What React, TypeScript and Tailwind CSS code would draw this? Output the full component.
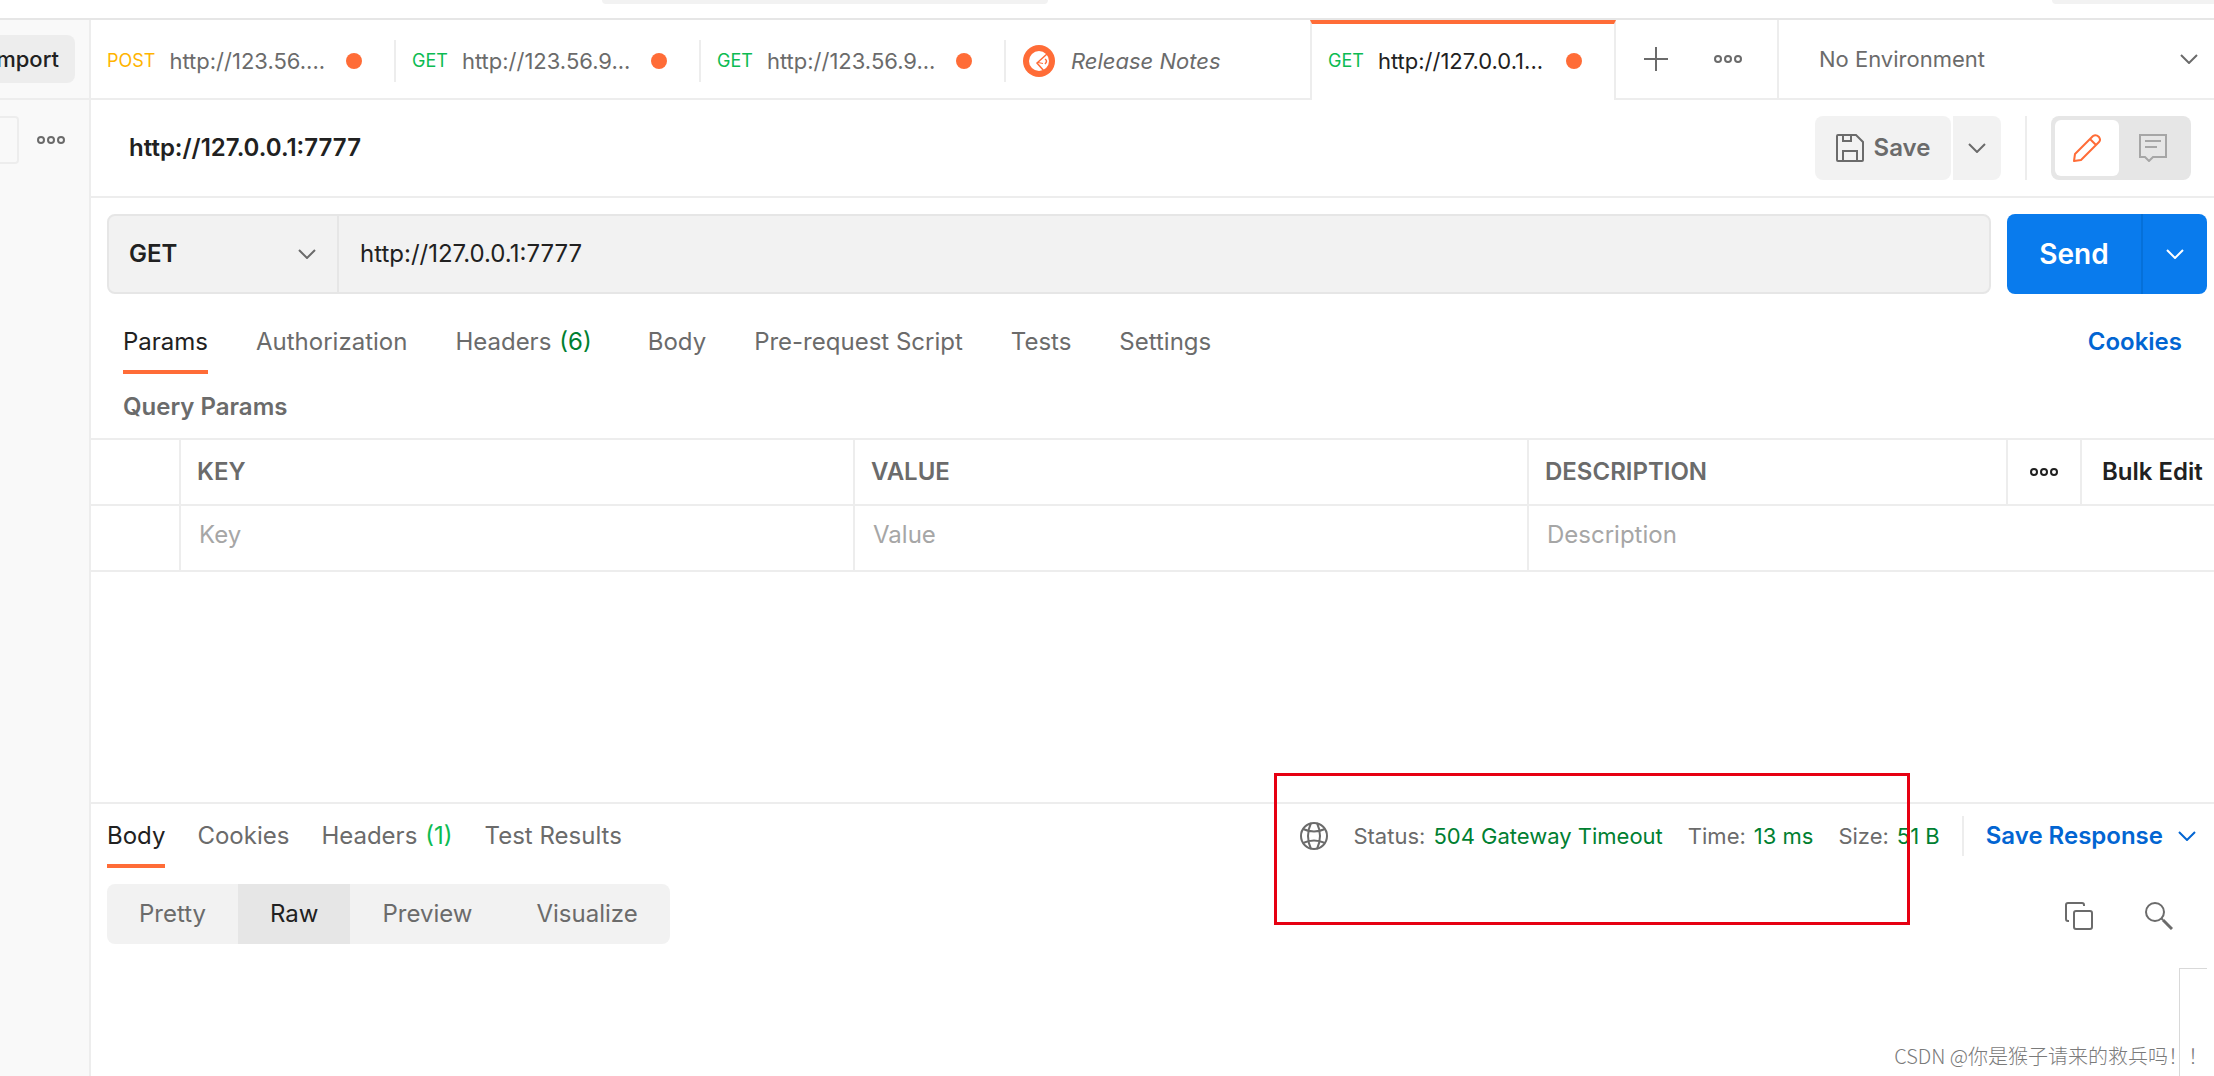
import type { ReactNode } from "react";

type Tab = { method: string; title: string };

const requestTabs: Tab[] = [
  { method: "POST", title: "http://123.56...." },
  { method: "GET", title: "http://123.56.9..." },
  { method: "GET", title: "http://123.56.9..." },
];

function Chevron({ className }: { className: string }) {
  return (
    <svg viewBox="0 0 18 10" fill="none" stroke="currentColor" strokeWidth="2" className={`h-[10px] w-[18px] shrink-0 ${className}`}>
      <path d="M1 1l8 8 8-8" />
    </svg>
  );
}

function Dots({ className }: { className: string }) {
  return (
    <svg viewBox="0 0 30 10" fill="none" stroke="currentColor" strokeWidth="2" className={`h-[10px] w-[30px] shrink-0 ${className}`}>
      <circle cx="5" cy="5" r="3" />
      <circle cx="15" cy="5" r="3" />
      <circle cx="25" cy="5" r="3" />
    </svg>
  );
}

function UnsavedDot() {
  return <span className="ml-auto size-4 shrink-0 rounded-full bg-[#ff6c37]" />;
}

function RequestTab({ method, title }: Tab) {
  return (
    <button className="flex h-full w-[305px] shrink-0 items-center pt-1 text-left">
      <span className="flex flex-1 items-center gap-[14px] pl-4 pr-8">
        <span className={`text-lg ${method === "POST" ? "text-[#ffb400]" : "text-[#0cbb52]"}`}>{method}</span>
        <span className="text-[22px] text-[#6b6b6b]">{title}</span>
        <UnsavedDot />
      </span>
      <span className="h-[42px] w-0.5 bg-[#ededed]" />
    </button>
  );
}

function Sidebar() {
  return (
    <aside className="flex w-[91px] shrink-0 flex-col border-r-2 border-[#ededed] bg-[#f9f9f9]">
      <div className="flex h-20 items-center overflow-hidden border-b-2 border-[#ededed]">
        <button className="flex h-12 w-[75px] items-center justify-end rounded-r-lg bg-[#ededed] pr-4 text-[22px] font-medium text-[#212121]">
          Import
        </button>
      </div>
      <div className="flex items-center gap-[17px] pt-4">
        <input aria-label="Filter" className="h-12 w-[19px] rounded-r border-2 border-l-0 border-[#ededed]" />
        <button aria-label="More">
          <Dots className="text-[#6b6b6b]" />
        </button>
      </div>
    </aside>
  );
}

function TabBar() {
  return (
    <div className="flex h-20 text-[22px]">
      <div className="flex border-b-2 border-[#ededed]">
        {requestTabs.map((tab, i) => (
          <RequestTab key={i} {...tab} />
        ))}
        <button className="flex w-[304px] shrink-0 items-center gap-4 pl-[17px] pt-1 text-[#6b6b6b]">
          <svg viewBox="0 0 32 32" fill="none" className="size-8">
            <circle cx="16" cy="16" r="16" fill="#ff6c37" />
            <circle cx="16" cy="16" r="10" fill="#fff" />
            <path d="M24 9l-10 9 7 8" stroke="#ff6c37" strokeWidth="1.5" />
            <path d="M22 14q3 2 0 5" stroke="#ff6c37" strokeWidth="1.5" />
            <path d="M15 17.500l5 1" stroke="#ff6c37" strokeWidth="1" />
          </svg>
          <span className="italic">Release Notes</span>
        </button>
      </div>
      <button className="flex w-[306px] shrink-0 items-center gap-[14px] border-x-2 border-t-4 border-x-[#ededed] border-t-[#ff6c37] pb-0.5 pl-4 pr-8">
        <span className="text-lg text-[#0cbb52]">GET</span>
        <span className="text-[#212121]">http://127.0.0.1...</span>
        <UnsavedDot />
      </button>
      <div className="flex flex-1 items-center border-b-2 border-[#ededed] text-[#6b6b6b]">
        <div className="flex h-full w-[163px] shrink-0 items-center gap-[45px] border-r-2 border-[#ededed] pl-7">
          <button aria-label="New tab">
            <svg viewBox="0 0 24 24" stroke="currentColor" strokeWidth="2" className="size-6">
              <path d="M12 0v24M0 12h24" />
            </svg>
          </button>
          <button aria-label="Tab options">
            <Dots className="" />
          </button>
        </div>
        <button className="flex flex-1 items-center justify-between pl-10 pr-4">
          No Environment
          <Chevron className="" />
        </button>
      </div>
    </div>
  );
}

function TitleBar() {
  return (
    <div className="flex h-[98px] items-center border-b-2 border-[#ededed] pl-[38px] pr-[23px]">
      <h1 className="text-2xl font-semibold text-[#212121]">http://127.0.0.1:7777</h1>
      <div className="ml-auto flex h-16 gap-0.5 text-[#6b6b6b]">
        <button className="flex w-[136px] items-center justify-center gap-2.5 rounded-lg bg-[#f2f2f2] text-2xl font-semibold">
          <svg viewBox="0 0 28 28" fill="none" stroke="currentColor" strokeWidth="2" className="size-7">
            <path d="M1 2q0-1 1-1h18l7 7v18q0 1-1 1H2q-1 0-1-1z" />
            <path d="M7 1v6h8V1M7 27V17h14v10" />
          </svg>
          Save
        </button>
        <button aria-label="Save options" className="flex w-12 items-center justify-center rounded-r-lg bg-[#f2f2f2]">
          <Chevron className="" />
        </button>
      </div>
      <div className="ml-6 h-16 w-0.5 bg-[#ededed]" />
      <div className="ml-6 flex h-16 w-[140px] rounded-lg bg-[#e6e6e6] p-1">
        <button aria-label="Edit" className="flex w-16 items-center justify-center rounded-md bg-white text-[#ff6c37]">
          <svg viewBox="0 0 28 28" fill="none" stroke="currentColor" strokeWidth="2" strokeLinejoin="round" className="size-7">
            <path d="M1 27l1-7L20 2q3-2 6 1 2 3 0 5L8 26zM17 5l6 6" />
          </svg>
        </button>
        <button aria-label="Comments" className="flex flex-1 items-center justify-center text-[#a6a6a6]">
          <svg viewBox="0 0 28 28" fill="none" stroke="currentColor" strokeWidth="2" className="size-7">
            <path d="M1 1h26v22H14l-4 4-4-4H1zM6 7h16M6 13h12" />
          </svg>
        </button>
      </div>
    </div>
  );
}

function UrlBar() {
  return (
    <div className="flex h-20 gap-4 pl-4 pr-[7px]">
      <div className="flex flex-1 overflow-hidden rounded-lg border-2 border-[#e6e6e6] bg-[#f2f2f2]">
        <button className="flex w-[230px] shrink-0 items-center justify-between border-r-2 border-[#e6e6e6] pl-5 pr-[21px] text-2xl font-semibold text-[#212121]">
          GET
          <Chevron className="text-[#6b6b6b]" />
        </button>
        <input aria-label="Request URL" defaultValue="http://127.0.0.1:7777" className="flex-1 pl-[21px] text-2xl text-[#212121] outline-none" />
      </div>
      <div className="flex w-[200px] shrink-0 overflow-hidden rounded-lg bg-[#097bed] text-white">
        <button className="w-[134px] text-[28px] font-semibold">Send</button>
        <button aria-label="Send options" className="flex flex-1 items-center justify-center border-l-2 border-[#0570d9]">
          <Chevron className="" />
        </button>
      </div>
    </div>
  );
}

function NavTab({ active = false, children }: { active?: boolean; children: ReactNode }) {
  return (
    <button className={`flex h-full gap-2 border-b-4 pt-4 ${active ? "border-[#ff6c37] text-[#212121]" : "border-transparent text-[#6b6b6b]"}`}>
      {children}
    </button>
  );
}

function ParamsTable() {
  return (
    <table className="w-full table-fixed border-collapse text-left text-2xl">
      <colgroup>
        <col className="w-[89px]" />
        <col className="w-[674px]" />
        <col className="w-[674px]" />
        <col />
        <col className="w-[74px]" />
        <col className="w-[133px]" />
      </colgroup>
      <thead>
        <tr className="h-[66px] border-y-2 border-[#ededed] text-[#6b6b6b]">
          <th className="border-r-2 border-[#ededed]" />
          <th className="border-r-2 border-[#ededed] pl-4 font-semibold">KEY</th>
          <th className="border-r-2 border-[#ededed] pl-4 font-semibold">VALUE</th>
          <th className="border-r-2 border-[#ededed] pl-4 font-semibold">DESCRIPTION</th>
          <th className="border-r-2 border-[#ededed]">
            <button aria-label="Column options" className="flex w-full justify-center">
              <Dots className="text-[#212121]" />
            </button>
          </th>
          <th className="pl-5 font-semibold text-[#212121]">
            <button className="whitespace-nowrap">Bulk Edit</button>
          </th>
        </tr>
      </thead>
      <tbody>
        <tr className="h-[66px] border-b-2 border-[#ededed]">
          <td className="border-r-2 border-[#ededed]" />
          <td className="border-r-2 border-[#ededed] pb-1.5 pl-[18px]">
            <input aria-label="Key" placeholder="Key" className="w-full placeholder:text-[#a6a6a6]" />
          </td>
          <td className="border-r-2 border-[#ededed] pb-1.5 pl-[18px]">
            <input aria-label="Value" placeholder="Value" className="w-full placeholder:text-[#a6a6a6]" />
          </td>
          <td colSpan={3} className="pb-1.5 pl-[18px]">
            <input aria-label="Description" placeholder="Description" className="w-full placeholder:text-[#a6a6a6]" />
          </td>
        </tr>
      </tbody>
    </table>
  );
}

function Metric({ label, value }: { label: string; value: string }) {
  return (
    <span className="flex gap-2">
      <span className="text-[#6b6b6b]">{label}</span>
      <span className="text-[#007f31]">{value}</span>
    </span>
  );
}

function ResponsePanel() {
  return (
    <section className="relative flex h-[274px] flex-col border-t-2 border-[#ededed]">
      <div className="flex h-16 items-center pl-4 pr-[18px]">
        <nav className="flex h-full gap-8 text-2xl">
          <NavTab active>Body</NavTab>
          <NavTab>Cookies</NavTab>
          <NavTab>
            Headers <span className="text-[#0cbb52]">(1)</span>
          </NavTab>
          <NavTab>Test Results</NavTab>
        </nav>
        <div className="ml-auto flex items-center gap-[22px] text-[22px]">
          <div className="flex items-center gap-[25px]">
            <svg viewBox="0 0 28 28" fill="none" stroke="#6b6b6b" strokeWidth="2" className="size-7">
              <circle cx="14" cy="14" r="13" />
              <path d="M11 1q-6 13 0 26M17 1q6 13 0 26M3 7q11 5 22 0M3 21q11-5 22 0" />
            </svg>
            <Metric label="Status:" value="504 Gateway Timeout" />
            <Metric label="Time:" value="13 ms" />
            <Metric label="Size:" value="51 B" />
          </div>
          <span className="h-10 w-0.5 bg-[#ededed]" />
          <button className="flex items-center gap-[15px] text-2xl font-semibold text-[#0265d2]">
            Save Response
            <Chevron className="" />
          </button>
        </div>
      </div>
      <div className="flex items-center justify-between pl-4 pr-[41px] pt-4">
        <div className="flex h-[60px] overflow-hidden rounded-lg bg-[#f2f2f2] text-2xl text-[#6b6b6b]">
          <button className="px-8">Pretty</button>
          <button className="bg-[#e6e6e6] px-8 text-[#212121]">Raw</button>
          <button className="px-8">Preview</button>
          <button className="px-8">Visualize</button>
        </div>
        <div className="flex gap-[52px] pt-1 text-[#6b6b6b]">
          <button aria-label="Copy">
            <svg viewBox="0 0 28 28" fill="none" stroke="currentColor" strokeWidth="2" className="size-7">
              <rect x="9" y="9" width="18" height="18" rx="2" />
              <path d="M4 19H3q-2 0-2-2V3q0-2 2-2h14q2 0 2 2v1" />
            </svg>
          </button>
          <button aria-label="Search">
            <svg viewBox="0 0 28 28" fill="none" stroke="currentColor" strokeWidth="2" className="size-7">
              <circle cx="10" cy="10" r="9" />
              <path d="M16 16l2 2" />
              <path d="M18 18l9 9" strokeWidth="3" />
            </svg>
          </button>
        </div>
      </div>
      <div className="ml-auto mr-[7px] mt-6 w-7 flex-1 border-l border-t border-[#d9d9d9]" />
      {/* highlight around the response status */}
      <div className="pointer-events-none absolute -top-[31px] right-[304px] h-[152px] w-[636px] border-[3px] border-[#e60012]" />
      <p className="absolute bottom-1.5 right-1.5 font-['Noto_Sans_CJK_SC',sans-serif] text-xl font-light text-[#7a7a7a]">
        CSDN @你是猴子请来的救兵吗！！
      </p>
    </section>
  );
}

export default function App() {
  return (
    <div className="flex min-h-screen flex-col overflow-hidden bg-white font-['Inter','Noto_Sans_CJK_SC',sans-serif]">
      <header className="flex h-5 shrink-0 items-start justify-between border-b-2 border-[#e6e6e6] pl-[602px]">
        <div className="h-1 w-[446px] rounded-b-lg bg-[#f2f2f2]" />
        <div className="h-1 w-[162px] rounded-bl-lg bg-[#f2f2f2]" />
      </header>
      <div className="flex flex-1">
        <Sidebar />
        <main className="flex min-w-0 flex-1 flex-col">
          <TabBar />
          <TitleBar />
          <div className="pt-4">
            <UrlBar />
          </div>
          <div className="flex h-20 items-start justify-between px-8 text-2xl">
            <nav className="flex h-full gap-12 pt-4">
              <NavTab active>Params</NavTab>
              <NavTab>Authorization</NavTab>
              <NavTab>
                Headers <span className="mr-2 text-[#007f31]">(6)</span>
              </NavTab>
              <NavTab>Body</NavTab>
              <NavTab>Pre-request Script</NavTab>
              <NavTab>Tests</NavTab>
              <NavTab>Settings</NavTab>
            </nav>
            <a href="#cookies" className="pt-8 font-semibold text-[#0265d2]">
              Cookies
            </a>
          </div>
          <h2 className="flex h-16 items-center pl-8 pt-0.5 text-2xl font-semibold text-[#6b6b6b]">Query Params</h2>
          <ParamsTable />
          <div className="flex-1" />
          <ResponsePanel />
        </main>
      </div>
    </div>
  );
}
